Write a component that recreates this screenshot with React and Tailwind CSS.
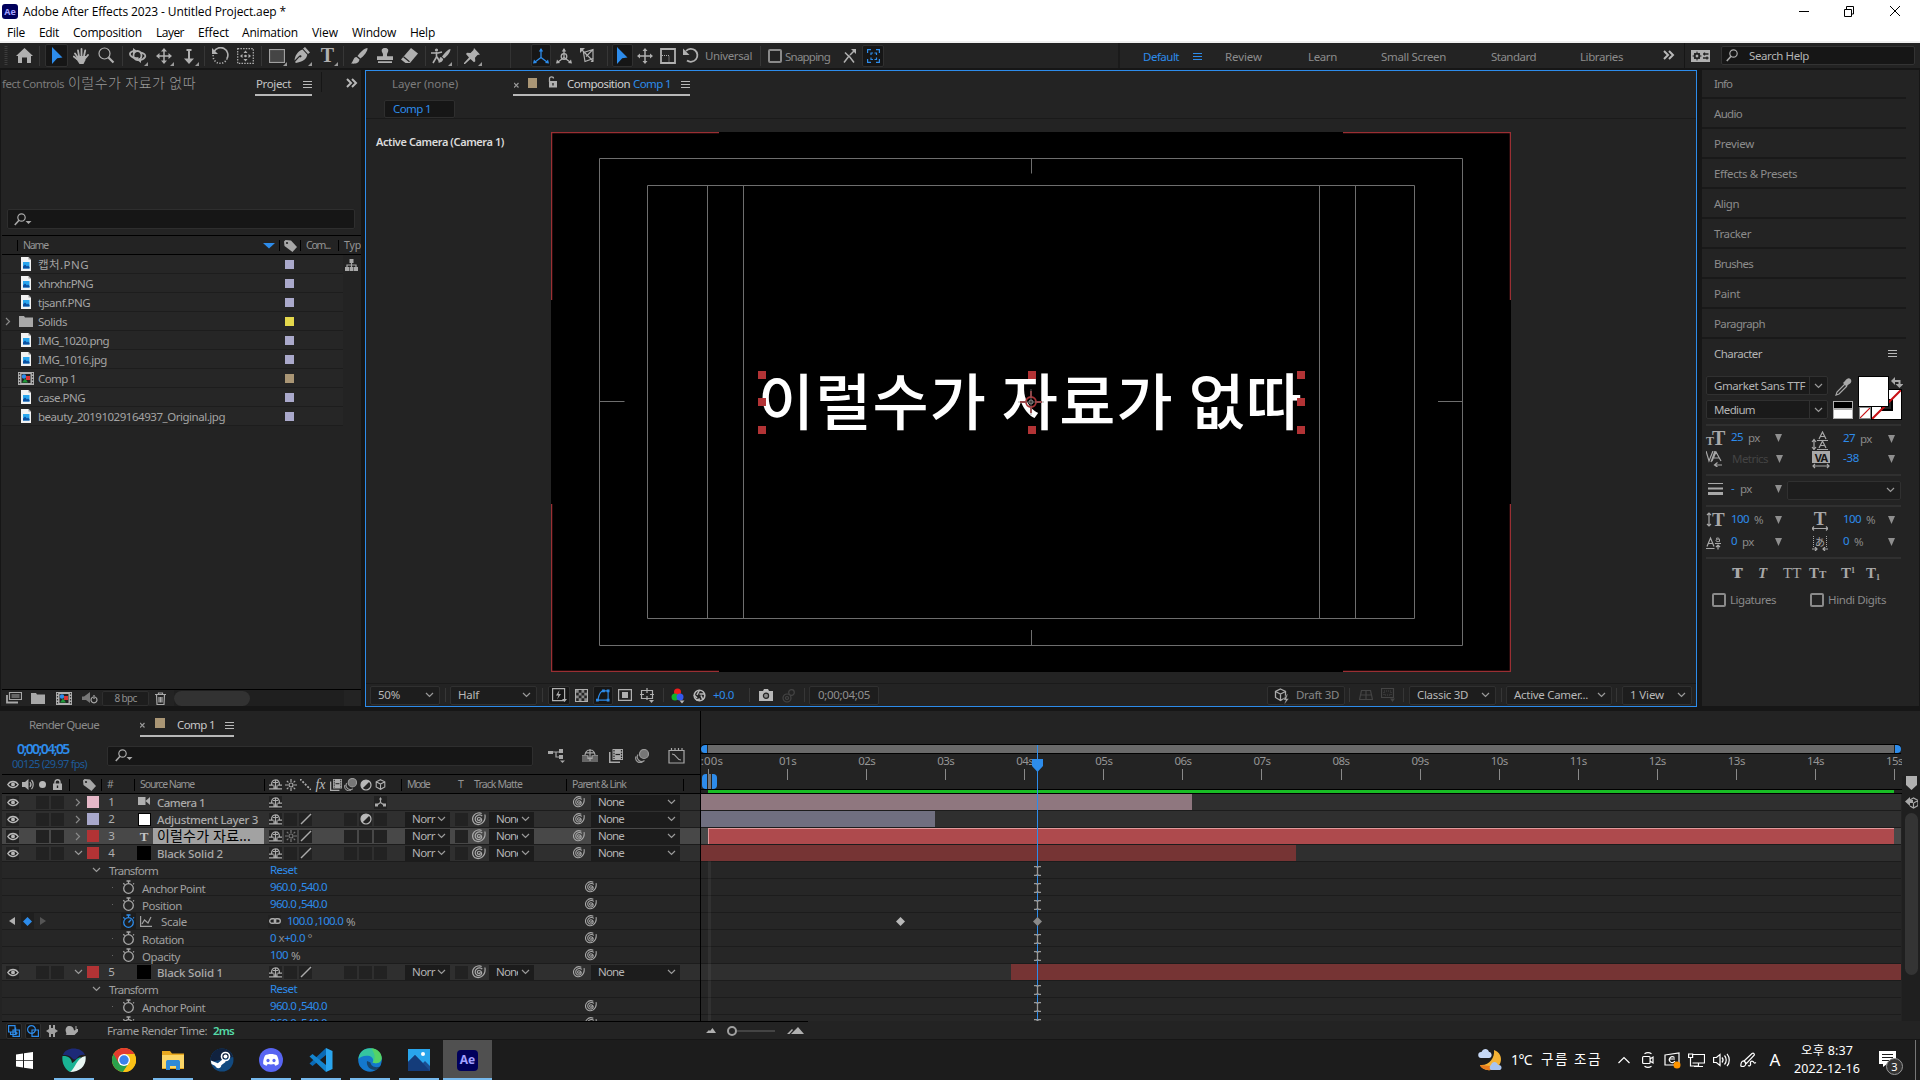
import React, { useLayoutEffect, useRef } from "react";

/* Text run fitted to a given width through letter spacing. */
function T({ w, c = "", children }) {
  const ref = useRef(null);
  useLayoutEffect(() => {
    const el = ref.current;
    if (!w || !el) return;
    el.style.letterSpacing = "0px";
    const natural = el.getBoundingClientRect().width;
    el.style.letterSpacing = (w - natural) / el.textContent.length + "px";
  }, [w, children]);
  return (
    <span ref={ref} className={"inline-block shrink-0 whitespace-nowrap leading-none " + c}>
      {children}
    </span>
  );
}

const Cell = ({ c = "", children }) => (
  <div className={"flex h-full shrink-0 items-center justify-center " + c}>{children}</div>
);
const Left = ({ c = "", children }) => (
  <div className={"flex h-full shrink-0 items-center " + c}>{children}</div>
);
const Svg = ({ w = 16, h = 16, vb, c = "", sw = 1.2, children }) => (
  <svg width={w} height={h} viewBox={vb || `0 0 ${w} ${h}`} className={"shrink-0 " + c} fill="none" stroke="currentColor" strokeWidth={sw}>
    {children}
  </svg>
);
const F = { fill: "currentColor", stroke: "none" };

/* ---------- small shared icons ---------- */
const Chevron = ({ c = "text-[#9a9a9a]" }) => <Svg w={9} h={6} c={c}><path d="M1 1l3.5 3.5L8 1" /></Svg>;
const Arrow = ({ c = "text-[#8a8a8a]" }) => <Svg w={6} h={9} c={c}><path d="M1 1l3.5 3.5L1 8" /></Svg>;
const Burger = ({ c = "text-[#b8b8b8]" }) => <Svg w={9} h={9} sw={1} c={c}><path d="M0 1.5h9M0 4.5h9M0 7.5h9" /></Svg>;
const Tri = () => <Svg w={7} h={8} c="text-[#8f8f8f]"><path d="M0 0h7L3.5 8z" {...F} /></Svg>;
const More = () => <Svg w={12} h={10} sw={2} c="text-[#b8b8b8]"><path d="M1 1l4 4-4 4M6 1l4 4-4 4" /></Svg>;
const SearchI = ({ drop }) => (
  <Svg w={18} h={13} c="text-[#a8a8a8]"><circle cx="7.5" cy="4.5" r="3.7" /><path d="M5 7.3L.8 12" strokeWidth="1.6" />{drop && <path d="M11.500 8h6l-3 3z" {...F} />}</Svg>
);
const Cursor = () => <Svg w={12} h={18} c="text-[#2d8ceb]"><path d="M1 0l10.500 10.500-5.300.8L1 17z" {...F} /></Svg>;
const Corner = ({ children, c = "w-[20px]" }) => (
  <div className={"relative flex h-[20px] items-center justify-center " + c}>
    {children}
    <Svg w={4} h={4} c="absolute right-0 bottom-0 text-[#9a9a9a]"><path d="M4 0v4H0z" {...F} /></Svg>
  </div>
);
const Whip = ({ s = 12 }) => (
  <Svg w={s} h={s} vb="0 0 14 14" sw={1.25} c="text-[#a8a8a8]">
    <path d="M8.300 7.200a1.500 1.500 0 1 1-1.500-1.700c1.900 0 3.100 1.500 2.700 3.100-.6 1.900-3.100 2.500-4.700 1.400C2.600 8.500 2.700 5.400 4.600 3.900c1.900-1.400 4.600-1.200 5.600.2M12.900 2.500c.6 3.500-.3 7-3.300 9-2.800 1.700-6.500 1.200-8-1.200C.2 7.900.5 4.900 2.300 2.900 4.200.8 7.600.4 9.700 1.500" />
  </Svg>
);
const Eye = () => <Svg w={12} h={9} sw={1.400} c="text-[#b8b8b8]"><path d="M.8 4.500C3.300.4 8.700.4 11.200 4.500 8.700 8.600 3.300 8.600.8 4.500z" /><circle cx="6" cy="4.400" r="1.900" {...F} /></Svg>;
const Shy = () => <Svg w={13} h={11} sw={1.200} c="text-[#aaa]"><path d="M2.500 6C2.500 2.600 4 .8 6.500.8s4 1.800 4 5.200M0 6.200h4.500M8.500 6.200H13M4 3.500h5M6.500 1v7.500M5 6.500v2.500h3V6.500M0 9.800h13" /></Svg>;
const Sun = ({ c = "text-[#aaa]" }) => <Svg w={12} h={12} c={c} sw={1.200}><circle cx="6" cy="6" r="2" /><path d="M6 0v3M6 9v3M0 6h3M9 6h3M1.800 1.800l1.600 1.600M8.600 8.600l1.600 1.600M1.800 10.200l1.600-1.600M8.600 3.400l1.600-1.600" /></Svg>;
const Slash = () => <Svg w={12} h={12} sw={1.400} c="text-[#aaa]"><path d="M1 11L11 1" /></Svg>;
const Half = () => <Svg w={12} h={12} c="text-[#b8b8b8]"><circle cx="6" cy="6" r="5" /><path d="M9.540 2.460A5 5 0 0 1 2.460 9.540z" transform="rotate(180 6 6)" {...F} /></Svg>;
const Blur = ({ s = 13 }) => <Svg w={s} h={s} vb="0 0 14 14" c="text-[#999]"><circle cx="9" cy="5" r="4.500" fill="#777" /><path d="M3 5.500a4.500 4.500 0 0 0 6.500 6M1 7.500a4.500 4.500 0 0 0 6.500 5.500" /></Svg>;
const Film = ({ s = 13 }) => <Svg w={s} h={s} vb="0 0 14 14" c="text-[#aaa]"><path d="M3.500 0h10.500v11H3.500zM0 3h1.500v9.500H11V14H0z" {...F} /><path d="M5 1v9M12.500 1v9" stroke="#222" strokeDasharray="1.500 1.200" /><path d="M6.500 5.500H11" stroke="#222" /></Svg>;
const Tag = () => <Svg w={13} h={12} c="text-[#a8a8a8]"><path d="M0 1.500L1.500 0 7 .5 13 7l-4.500 5L.5 6z" {...F} /><circle cx="3" cy="3" r="1.100" fill="#222" stroke="none" /></Svg>;
const Cube = ({ s = 12, c = "text-[#b0b0b0]" }) => <Svg w={s} h={s} vb="0 0 12 12" c={c}><path d="M6 .8l4.700 2.300v5.500L6 11.200 1.300 8.600V3.100zM1.300 3.100L6 5.500l4.700-2.400M6 5.500v5.700" /></Svg>;
const Axis = ({ c, s = 16, n }) => (
  <Svg w={s} h={s} vb="0 0 16 16" c={c} sw={1.300}>
    <path d="M8 1v8.500M8 9.500L2 14M8 9.500l6 4.500" /><path d="M8 0l2.200 3.500H5.800zM0 15.500l1-4 3 3.500zM16 15.500l-1-4-3 3.500z" {...F} />{n && <circle cx="8" cy="8.500" r="2.800" />}
  </Svg>
);
const Axis3D = () => (
  <Svg w={11} h={10} sw={1.200} c="text-[#aaa]"><path d="M5.500 1.500v4L2 8M5.500 5.500L9 8" /><path d="M4 2.500L5.500 0 7 2.500zM0 6.500h3v3H0zM8 6.500h3v3H8z" {...F} /></Svg>
);
const Stopwatch = ({ c = "text-[#a8a8a8]", on }) => (
  <Svg w={13} h={14} sw={1.300} c={c}><circle cx="6.500" cy="8.500" r="4.800" /><path d="M4.500 1h4M6.500 1v2.500M1.300 3.200l1.400 1.400M11.200 4.200l.8-.8" />{on && <path d="M6.500 8.500L9 5.800" />}</Svg>
);
const Keyframe = ({ c }) => <Svg w={9} h={9} c={c}><path d="M4.500 0L9 4.500 4.500 9 0 4.500z" {...F} /></Svg>;
const AeLogo = ({ c, t }) => (
  <div className={"flex items-center justify-center bg-[#00005b] font-bold text-[#a3a0ff] " + c}><span className={"leading-none " + t}>Ae</span></div>
);

/* ---------- top ---------- */
const TitleBar = () => (
  <div className="flex h-[22px] shrink-0 items-center bg-white pl-[2px] font-['Open_Sans','Noto_Sans_CJK_KR',sans-serif]">
    <AeLogo c="h-[15px] w-[16px] rounded-[3px]" t="text-[9px]" />
    <T w={263} c="ml-[5px] mt-px text-[12px] text-black">Adobe After Effects 2023 - Untitled Project.aep *</T>
    <div className="ml-auto flex items-center pr-[20px] text-black">
      <Svg w={10} h={10} sw={1}><path d="M0 5.500h10" /></Svg>
      <Svg w={10} h={11} sw={1} c="ml-[35px]"><path d="M.5 3.500h7v7h-7zM2.500 3V.5h7v7.500H8" /></Svg>
      <Svg w={10} h={10} sw={1} c="ml-[36px]"><path d="M0 0l10 10M10 0L0 10" /></Svg>
    </div>
  </div>
);
const MenuBar = () => (
  <div className="flex h-[21px] shrink-0 items-center border-b-2 border-[#f0f0f0] bg-white pl-[7px] pt-[3px] font-['Open_Sans','Noto_Sans_CJK_KR',sans-serif] text-[12px] text-black">
    {[["File", 18, 14], ["Edit", 20, 14], ["Composition", 69, 14], ["Layer", 28, 14], ["Effect", 31, 13], ["Animation", 56, 14], ["View", 26, 14], ["Window", 44, 14], ["Help", 25, 0]].map(([t, w, g]) => (
      <div key={t} className="flex shrink-0" style={{ paddingRight: g }}><T w={w}>{t}</T></div>
    ))}
  </div>
);
const Sep = ({ c }) => <Cell c={c}><div className="h-[20px] w-px bg-[#363636]" /></Cell>;
const Sel = ({ c = "h-[23px] w-[23px]", children }) => <div className={"flex shrink-0 items-center justify-center rounded-[2px] border border-[#303030] bg-[#161616] " + c}>{children}</div>;

const Toolbar = () => (
  <div className="flex h-[25px] shrink-0 items-center bg-[#232323] text-[#b0b0b0]">
    <Cell c="w-[12px]"><Svg w={4} h={20} sw={3} c="text-[#3c3c3c]"><path d="M2 0v20" strokeDasharray="1 1" /></Svg></Cell>
    <Cell c="w-[25px]"><Svg w={17} h={15}><path d="M8.500 0L17 8h-2v7h-4V9.500H6V15H2V8H0z" {...F} /></Svg></Cell>
    <Sep c="w-[5px]" />
    <Cell c="w-[29px]"><Sel><Cursor /></Sel></Cell>
    <Cell c="w-[20px]"><Svg w={16} h={16} sw={1.800}><path d="M4.500 9L2 5.500M6 8L5 2.500M8.500 8V1M11 8l1.200-5.500M12.500 10l2.500-3" strokeLinecap="round" /><path d="M3.500 8h9.800l-1 4.500L10.500 16h-4L3.500 11.500z" {...F} /><path d="M4 11L.8 8.500" strokeLinecap="round" /></Svg></Cell>
    <Cell c="w-[29px] pl-[2px]"><Svg w={17} h={17}><circle cx="6.500" cy="6.500" r="5.500" /><path d="M10.500 10.500l5 5" strokeWidth="2.200" /></Svg></Cell>
    <Sep c="w-[4px]" />
    <Cell c="w-[27px]"><Corner><Svg w={18} h={15} sw={1.800}><ellipse cx="8.500" cy="7.500" rx="4" ry="4.500" /><path d="M6 3C2 3 0 5 1.500 7.500c1.500 2 5 3 8 2.500M11 4.500c4 .5 6 2.500 5 4.500-1 1.800-3 3-6 3" /><path d="M4 0v6l4-3zM12 9v6l-4-3z" {...F} /></Svg></Corner></Cell>
    <Cell c="w-[25px]"><Corner><Svg w={16} h={16} sw={1.500}><path d="M8 2v12M2 8h12" /><path d="M8 0l3 3.500H5zM8 16l3-3.500H5zM0 8l3.500-3v6zM16 8l-3.500-3v6z" {...F} /></Svg></Corner></Cell>
    <Cell c="w-[25px]"><Corner><Svg w={12} h={16} sw={2}><path d="M6 2v11M3.500 2h5" /><path d="M6 16L1 10.500h10z" {...F} /></Svg></Corner></Cell>
    <Sep c="w-[6px]" />
    <Cell c="w-[26px]"><Svg w={17} h={17} sw={1.600}><path d="M2 4.500A7 7 0 0 1 15 11.500" /><path d="M15 11.500A7 7 0 0 1 1.500 7" strokeDasharray="1.200 1.600" /><path d="M0 1v6h6z" {...F} /></Svg></Cell>
    <Cell c="w-[25px]"><Svg w={17} h={16}><rect x=".7" y=".7" width="15.600" height="14.600" strokeDasharray="1.500 1.200" /><path d="M8.500 2.500l2 2.500h-4zM8.500 13.500l2-2.500h-4zM3 8l2.500-2v4zM14 8l-2.500-2v4z" {...F} /><circle cx="8.500" cy="8" r="1.300" {...F} /></Svg></Cell>
    <Sep c="w-[6px]" />
    <Cell c="w-[26px]"><Corner><Svg w={16} h={14} c="text-[#a0a0a0]"><rect x=".5" y=".5" width="15" height="13" fill="#454545" /></Svg></Corner></Cell>
    <Cell c="w-[24px]"><Corner><Svg w={16} h={17}><path d="M11 0l5 5.500-2 1.500-5-5.500zM8.500 2.500l4.800 5.200c-1 4.500-4 6.500-8.500 7.500L2 16l-1-1 4.500-5c.5.8 2 .3 2-.7S6 7.800 5 9L.5 13.500c.5-5 3-9 8-11z" {...F} /></Svg></Corner></Cell>
    <Cell c="w-[27px]"><Corner><span className="pb-[2px] font-['Liberation_Serif',serif] text-[20px] font-bold leading-none">T</span></Corner></Cell>
    <Sep c="w-[5px]" />
    <Cell c="w-[26px]"><Svg w={17} h={16}><path d="M16.500 0c.5 3-4 8.500-7 10.500L6.500 8C9 4.500 13.500 0 16.500 0zM5.500 9l3 2.500C8 15.500 4 16 0 15.500 2.500 14 2 9 5.500 9z" {...F} /></Svg></Cell>
    <Cell c="w-[25px]"><Svg w={16} h={15}><path d="M8 0c3.500 0 4 2.500 2.500 5-.6 1.200-.6 2.200-.3 3.200H16V12H0V8.200h5.800c.3-1 .3-2-.3-3.200C4 2.500 4.500 0 8 0zM1 13.200h14V15H1z" {...F} /></Svg></Cell>
    <Cell c="w-[25px]"><Svg w={17} h={16}><path d="M10 0l7 5.500L9 15H4.500L0 11.500z" {...F} /><path d="M2.500 8.800l6 5" stroke="#232323" /></Svg></Cell>
    <Sep c="w-[6px]" />
    <Cell c="w-[26px]"><Corner c="w-[22px]"><Svg w={20} h={16} sw={1.600}><circle cx="5.500" cy="2" r="1.600" {...F} /><path d="M0 5h4l3 0 4-1M5.500 4v5L2 15M6 9l3 5" /><path d="M19.500 1c0 4-5 8.500-6.500 9.500l-2-2C13 6 17 1 19.500 1zM10 9l2.200 2c-.5 3-3 3.500-5 3.500C8.500 13 8 9.500 10 9z" {...F} /></Svg></Corner></Cell>
    <Sep c="w-[6px]" />
    <Cell c="w-[24px]"><Corner><Svg w={16} h={16}><path d="M10 0l6 6.500-2.500.5-2.500 2.700.3 3.600-1.300 1L6.500 11 1 16H0v-1l5-5.500L2 6l1-1.300 3.500.3L9.500 2z" {...F} /></Svg></Corner></Cell>
    <div className="w-[24px] shrink-0" />
    <Cell c="w-[4px]"><div className="h-[25px] w-px bg-[#333]" /></Cell>
    <div className="w-[17px] shrink-0" />
    <Cell c="w-[23px]"><Sel c="h-[23px] w-[20px]"><Axis c="text-[#2d8ceb]" /></Sel></Cell>
    <Cell c="w-[24px]"><Axis n /></Cell>
    <Cell c="w-[22px]"><Svg w={14} h={15}><path d="M3.500 4.500L13 1.500v9L5 13.500zM2 2l11 11M6 8.500l7-7" /><path d="M0 0h5L0 5zM13.500 14v-3.500L10.500 14z" {...F} /></Svg></Cell>
    <div className="w-[6px] shrink-0" />
    <Sep c="w-[6px]" />
    <Cell c="w-[24px]"><Sel c="h-[23px] w-[21px]"><Cursor /></Sel></Cell>
    <Cell c="w-[22px]"><Svg w={16} h={16} sw={1.500}><path d="M8 2v12M2 8h12" /><path d="M8 0l2.500 3h-5zM8 16l2.500-3h-5zM0 8l3-2.500v5zM16 8l-3-2.500v5z" {...F} /></Svg></Cell>
    <Cell c="w-[24px]"><Svg w={16} h={16} sw={1.800}><path d="M1 1h14v14H1z" /><path d="M2 7.500h7v7" strokeWidth="1" strokeDasharray="1 1" /></Svg></Cell>
    <Cell c="w-[20px] pl-[2px]"><Svg w={17} h={17} sw={1.800}><path d="M3 4a6.500 6.500 0 1 1 1 9.500" /><path d="M0 1.500v6.500h6.500z" {...F} /></Svg></Cell>
    <Left c="w-[58px] pl-[5px] text-[11.500px] text-[#8a8a8a]"><T w={47}>Universal</T></Left>
    <Sep c="w-[5px]" />
    <Cell c="w-[22px] pl-px"><div className="h-[14px] w-[14px] rounded-[2px] border-2 border-[#8a8a8a]" /></Cell>
    <Left c="w-[53px] pt-[2px] text-[11.500px] text-[#8a8a8a]"><T w={45}>Snapping</T></Left>
    <Cell c="w-[22px]"><Svg w={13} h={14} sw={1.500}><path d="M1 13.500l5-6.500 5 6.500M2 3.500l3.500 3.500M7 6l4-4" /><path d="M8 0h5v5z" {...F} /></Svg></Cell>
    <Cell c="w-[26px]"><Sel c="h-[22px] w-[22px]"><Svg w={13} h={14} c="text-[#2d8ceb]"><path d="M.6 4V.6H4M9 .6h3.400V4M12.400 10v3.400H9M4 13.400H.6V10M4 6V4h2M7.500 4h2v2M4 8.500v2h2M7.500 10.500h2v-2" /></Svg></Sel></Cell>
    <div className="w-[232px] shrink-0" />
    <div className="h-full w-[2px] shrink-0 bg-[#1a1a1a]" />
    <div className="flex h-full items-center pl-[23px] pt-[2px] text-[11.500px] text-[#8c8c8c]">
      <T w={36} c="text-[#2d8ceb]">Default</T>
      <div className="ml-[14px] flex w-[32px]"><Burger c="text-[#2d8ceb]" /></div>
      <div className="flex w-[83px]"><T w={37}>Review</T></div>
      <div className="flex w-[73px]"><T w={29}>Learn</T></div>
      <div className="flex w-[110px]"><T w={65}>Small Screen</T></div>
      <div className="flex w-[89px]"><T w={45}>Standard</T></div>
      <div className="flex w-[83px]"><T w={43}>Libraries</T></div>
    </div>
    <Left c="w-[21px] pb-px"><More /></Left>
    <div className="h-full w-px bg-[#161616]" />
    <Cell c="w-[30px]"><Svg w={19} h={12}><path d="M0 0h19v12H0z" {...F} /><circle cx="6" cy="6" r="2.400" stroke="#232323" strokeWidth="1.800" /><path d="M6 1.500v9M1.500 6h9M3 3l6 6M9 3L3 9" stroke="#232323" strokeWidth=".9" /><circle cx="6" cy="6" r="1.200" {...F} /><path d="M12 4h5.500M12 8h5.500M13.500 2.500v3M16 6.500v3" stroke="#232323" strokeWidth="1.300" /></Svg></Cell>
    <div className="ml-[6px] flex h-[19px] w-[194px] items-center rounded-[2px] border border-[#333] bg-[#161616] pl-[4px]">
      <SearchI /><T w={60} c="ml-[5px] text-[11.500px] text-[#b4b4b4]">Search Help</T>
    </div>
  </div>
);

/* ---------- project panel ---------- */
const FileIcon = () => (
  <Svg w={10} h={14}><path d="M0 0h7.500L10 2.500V14H0z" fill="#f2f2f2" stroke="none" /><path d="M2 5h6.500v6.500H2z" fill="#2aa6ee" stroke="none" /><path d="M2 9.500l2-2 2 2 1-1 1.500 1.500v1.500H2z" fill="#0b4fa0" stroke="none" /><path d="M7.500 0v2.500H10z" fill="#999" stroke="none" /></Svg>
);
const Folder = ({ c = "text-[#a8a8a8]" }) => <Svg w={14} h={11} c={c}><path d="M0 0h5l1 1.500h8V11H0z" {...F} /></Svg>;
const CompIcon = () => (
  <Svg w={16} h={13}><path d="M0 0h16v13H0z" fill="#b0b0b0" stroke="none" /><path d="M1.500 1v11M14.500 1v11" stroke="#333" strokeDasharray="1.500 1.500" /><path d="M3.500 2h9v9h-9z" fill="#222" stroke="none" /><circle cx="6" cy="4.500" r="2.200" fill="#2d8ceb" stroke="none" /><path d="M8 4h4v4H8z" fill="#d33" stroke="none" /><path d="M4 10.500l3-4 3 4z" fill="#1f9a3a" stroke="none" /></Svg>
);
const FILES = [
  ["캡처.PNG", 51, "f"], ["xhrxhr.PNG", 55, "f"], ["tjsanf.PNG", 52, "f"], ["Solids", 29, "d"], ["IMG_1020.png", 71, "f"],
  ["IMG_1016.jpg", 69, "f"], ["Comp 1", 38, "c"], ["case.PNG", 47, "f"], ["beauty_20191029164937_Original.jpg", 187, "f"],
];
const ProjectPanel = () => (
  <section className="ml-px flex h-[636px] w-[360px] shrink-0 flex-col overflow-hidden bg-[#232323]">
    <div className="flex h-[26px] shrink-0 items-center pl-px text-[11.500px] text-[#7c7c7c]">
      <T w={62} c="mt-[2px]">fect Controls</T>
      <T w={128} c="ml-[4px] text-[14px] font-light text-[#999]">이럴수가 자료가 없따</T>
      <div className="relative ml-[59px] flex h-full w-[57px] items-center justify-between pl-px pt-[2px]">
        <T w={35} c="text-[#c4c4c4]">Project</T><Burger />
        <div className="absolute inset-x-0 bottom-0 h-[2px] bg-[#b8b8b8]" />
      </div>
      <div className="mb-[2px] ml-[9px] h-[20px] w-px bg-[#161616]" />
      <div className="ml-[24px]"><More /></div>
    </div>
    <div className="ml-[6px] mt-[113px] flex h-[20px] w-[348px] shrink-0 items-center rounded-[2px] border border-[#2e2e2e] bg-[#161616] pl-[6px]"><SearchI drop /></div>
    <div className="ml-px mt-[6px] flex h-[20px] shrink-0 items-center border-y border-black pt-px text-[10.500px] text-[#959595]">
      <div className="ml-[15px] h-[11px] w-px bg-black" />
      <T w={25} c="ml-[5px]">Name</T>
      <Svg w={12} h={6} c="ml-[215px] text-[#2d8ceb]"><path d="M0 0h12L6 5.500z" {...F} /></Svg>
      <div className="ml-[4px] h-[11px] w-px bg-black" />
      <div className="ml-[4px]"><Tag /></div>
      <div className="ml-[3px] h-[11px] w-px bg-black" />
      <T w={24} c="ml-[5px]">Com...</T>
      <div className="ml-[8px] h-[11px] w-px bg-black" />
      <T w={17} c="ml-[5px]">Typ</T>
    </div>
    {FILES.map(([n, w, k], i) => (
      <div key={n} className="ml-px flex h-[19px] shrink-0 items-center">
        <div className="flex h-full w-[341px] items-center border-b border-[#1d1d1d] bg-[#262626]">
          <Cell c="w-[12px]">{k === "d" && <Arrow />}</Cell>
          <Cell c="w-[24px]">{k === "f" ? <FileIcon /> : k === "d" ? <Folder /> : <CompIcon />}</Cell>
          <Left c="w-[247px] pt-px text-[11.500px] text-[#a4a4a4]"><T w={w}>{n}</T></Left>
          <div className={"h-[9px] w-[9px] " + (k === "d" ? "bg-[#e4d84c]" : k === "c" ? "bg-[#aa9675]" : "bg-[#aaa9cb]")} />
        </div>
        {i === 0 && <Svg w={13} h={12} c="ml-[2px] text-[#a8a8a8]"><path d="M4.500 0h4v4h-4zM0 8h4v4H0zM4.500 8h4v4h-4zM9 8h4v4H9z" {...F} /><path d="M6.500 4v4M2 8V6h9v2" /></Svg>}
      </div>
    ))}
    <div className="ml-px mt-auto flex h-[17px] shrink-0 items-center border-t border-black text-[#a8a8a8]">
      <Cell c="w-[24px]"><Svg w={16} h={12}><path d="M3.500.5h12v7h-12zM5.500 3h8M5.500 5h8" /><path d="M1 3v7.500h11" strokeWidth="1.800" /></Svg></Cell>
      <Cell c="w-[24px]"><Folder /></Cell>
      <Cell c="w-[27px]"><CompIcon /></Cell>
      <Cell c="w-[25px]"><Svg w={17} h={13}><path d="M9 0v11L5 8H1V4.500h2z" fill="#777" stroke="none" /><path d="M12 5a3 3 0 1 0 2 0M13 3v4" /></Svg></Cell>
      <div className="flex h-[15px] w-[47px] items-center justify-center rounded-[2px] border border-[#2e2e2e] bg-[#1d1d1d] text-[10px] text-[#8f8f8f]"><T w={22}>8 bpc</T></div>
      <Cell c="w-[22px]"><Svg w={11} h={13}><path d="M0 2.500h11M3.500 2.500V1h4v1.500M1.500 2.500l.5 10h7l.5-10M4 5v5.500M5.500 5v5.500M7 5v5.500" /></Svg></Cell>
      <div className="ml-[3px] flex h-full w-[170px] items-center bg-[#1f1f1f]"><div className="h-[15px] w-[76px] rounded-full bg-[#323232]" /></div>
    </div>
  </section>
);

/* ---------- composition viewer ---------- */
const Box = ({ c = "", children }) => (
  <div className={"flex h-[19px] shrink-0 items-center rounded-[2px] border border-[#303030] bg-[#1d1d1d] pl-[7px] pr-[5px] " + c}>{children}</div>
);
const VSep = ({ c = "" }) => <div className={"h-[14px] w-px shrink-0 bg-[#363636] " + c} />;
const HANDLES = [[207, 239], [477, 239], [746, 239], [207, 266], [746, 266], [207, 294], [477, 294], [746, 294]];

const Viewer = () => (
  <section className="ml-[4px] flex h-[637px] w-[1332px] shrink-0 flex-col border border-[#2d8ceb] bg-[#232323]">
    <div className="flex h-[25px] shrink-0 items-center pl-[26px] text-[11.500px]">
      <T w={66} c="mt-px text-[#7c7c7c]">Layer (none)</T>
      <div className="relative ml-[55px] flex h-full w-[177px] items-center pl-[1px] pt-px">
        <Svg w={5} h={6} c="mt-px text-[#999]"><path d="M0 1l4.500 4.500M4.500 1L0 5.500" /></Svg>
        <div className="mb-[2px] ml-[9px] h-[10px] w-[10px] bg-[#aa9675]" />
        <Svg w={9} h={12} c="mb-[4px] ml-[11px] text-[#b0b0b0]" sw={1.300}><path d="M1.500 6V2.500C1.500.3 5.500.3 5.500 2.500" /><path d="M1 5h8v6.500H1z" {...F} /><path d="M5 7v2.500" stroke="#222" /></Svg>
        <T w={63} c="ml-[10px] text-[#d0d0d0]">Composition</T>
        <T w={38} c="ml-[3px] text-[#2d8ceb]">Comp 1</T>
        <div className="ml-[10px]"><Burger /></div>
        <div className="absolute inset-x-0 bottom-0 h-[2px] bg-[#b8b8b8]" />
      </div>
    </div>
    <div className="flex h-[23px] shrink-0 border-b border-[#1a1a1a] pl-[18px] pt-[4px]">
      <div className="flex h-[18px] w-[71px] items-center rounded-[2px] border border-[#2e2e2e] bg-[#161616] pl-[8px] text-[11.500px] text-[#2d8ceb]"><T w={38}>Comp 1</T></div>
    </div>
    <div className="flex h-[565px] shrink-0 border-b border-[#1a1a1a]">
      <div className="w-[185px] pl-[10px] pt-[9px]"><T w={128} c="text-[11px] font-semibold text-[#dcdcdc]">Active Camera (Camera 1)</T></div>
      <div className="relative mt-[13px] h-[540px] w-[960px] overflow-hidden bg-black">
        <Svg w={960} h={540} sw={1} c="text-[#6e6e6e]">
          <path d="M48.500 26.500h863v487h-863zM96.500 53.500h767v433h-767zM156.500 53.500v433M192.500 53.500v433M768.500 53.500v433M804.500 53.500v433M480.500 26.500v15M480.500 498v15M48.500 269.500h25M887 269.500h25" />
          <path d="M168 .5H.5V168M792 .5h167.500V168M.5 372v167.500H168M959.500 372v167.500H792" stroke="#9a2f33" strokeWidth="1.500" />
        </Svg>
        <div className="absolute left-[207px] top-[233px] flex h-[66px] items-center">
          <T w={545} c="font-['Noto_Sans_CJK_KR',sans-serif] text-[61px] font-medium text-white">이럴수가 자료가 없따</T>
        </div>
        {HANDLES.map(([x, y]) => <div key={x + "-" + y} className="absolute h-[8px] w-[8px] bg-[#b23335]" style={{ left: x, top: y }} />)}
        <Svg w={26} h={26} c="absolute left-[467px] top-[257px] text-[#a83236]" sw={1.800}><circle cx="13" cy="13" r="5" /><circle cx="13" cy="13" r="2" stroke="#999" strokeWidth="1" /><path d="M13 2v6M13 18v6M2 13h6M18 13h6" /><path d="M13 0v26M0 13h26" stroke="#777" strokeWidth=".7" /></Svg>
      </div>
    </div>
    <div className="flex flex-1 items-center pl-[4px] text-[11.500px] text-[#b8b8b8]">
      <Box c="w-[70px] justify-between"><T w={22}>50%</T><Chevron /></Box>
      <VSep c="ml-[5px] mr-[4px]" />
      <Box c="w-[87px] justify-between"><T w={21}>Half</T><Chevron /></Box>
      <VSep c="ml-[5px] mr-[5px]" />
      <div className="flex h-full items-center text-[#b0b0b0]">
        <Cell c="w-[22px]"><Sel c="h-[19px] w-[22px]"><Svg w={15} h={14}><path d="M.6.6h12v12H.6z" /><path d="M7.500 2L4 7.500h2.500L5 11.500l4-5.500H6.500z" {...F} /><path d="M10 11h5l-2.500 3z" {...F} /></Svg></Sel></Cell>
        <Cell c="w-[22px]"><Svg w={13} h={13} vb="0 0 14 14"><path d="M.6.6h12.800v12.800H.6z" /><path d="M1 1h3v3H1zM7 1h3v3H7zM4 4h3v3H4zM10 4h3v3h-3zM1 7h3v3H1zM7 7h3v3H7zM4 10h3v3H4zM10 10h3v3h-3z" fill="#888" stroke="none" /></Svg></Cell>
        <Cell c="w-[22px]"><Sel c="h-[19px] w-[20px]"><Svg w={14} h={13} vb="0 0 15 14" c="text-[#2d8ceb]"><path d="M2 12C3 6 5 2 8 2h5v10z" /><path d="M0 10.500h3v3H0zM6.500 .5h3v3h-3zM11.500.5h3v3h-3zM11.500 10.500h3v3h-3z" {...F} /></Svg></Sel></Cell>
        <Cell c="w-[22px]"><Svg w={14} h={12}><path d="M.6.6h12.800v10.800H.6z" /><path d="M4 3h6v6H4z" {...F} /></Svg></Cell>
        <Cell c="w-[22px]"><Svg w={14} h={15}><path d="M1.500 2.500h11v8h-11zM7 0v5M7 8v4M0 6.500h4M10 6.500h4" /><path d="M9 12h5l-2.500 3z" {...F} /></Svg></Cell>
      </div>
      <VSep c="ml-[5px]" />
      <Cell c="w-[28px] pt-[2px]"><Svg w={14} h={16}><circle cx="6.500" cy="4" r="3.500" fill="#f01c1c" stroke="none" /><circle cx="4" cy="9" r="3.500" fill="#12b32a" stroke="none" /><circle cx="9" cy="9" r="3.500" fill="#3358ee" stroke="none" /><path d="M8.500 12.500h5L11 15.500z" {...F} /></Svg></Cell>
      <Cell c="w-[14px]"><Svg w={13} h={13} sw={1.600}><circle cx="6.500" cy="6.500" r="5.300" /><path d="M6.500 1L4 6M12 5H6.500M10 11L8 6.500M3 11l4-1M1 6l3 3" /></Svg></Cell>
      <T w={21} c="ml-[7px] text-[#2d8ceb]">+0.0</T>
      <VSep c="ml-[15px]" />
      <Cell c="w-[32px]"><Svg w={14} h={12}><path d="M0 2h4l1-2h4l1 2h4v10H0z" {...F} /><circle cx="7" cy="6.700" r="2.600" fill="#888" stroke="#232323" /></Svg></Cell>
      <Cell c="w-[12px] text-[#444]"><Svg w={13} h={15}><circle cx="5" cy="10" r="4" /><circle cx="9.500" cy="4.500" r="2.800" /><circle cx="5" cy="10" r="1.500" /></Svg></Cell>
      <VSep c="ml-[10px] mr-[4px]" />
      <Box c="w-[70px]"><T w={52} c="ml-[1px] text-[#8f8f8f]">0;00;04;05</T></Box>
      <div className="flex-1" />
      <Box c="w-[78px] justify-between !pl-[6px]"><Svg w={16} h={17} c="mt-[2px] text-[#aaa]" sw={1.300}><path d="M6.500 1l5 2.500v6l-5 3-5-3v-6zM1.500 3.500l5 2.500 5-2.500M6.500 6v6.500" /><path d="M13 6l-4 6h2.500l-1.500 5 5-6.500h-2.500L14 6z" fill="#aaa" stroke="#1d1d1d" strokeWidth=".5" /></Svg><T w={43} c="text-[#868686]">Draft 3D</T></Box>
      <VSep c="ml-[4px]" />
      <Cell c="w-[32px] text-[#444]"><Svg w={14} h={10}><path d="M2.500.5h9l2 9H.5zM7 0v10M1 5h12" /></Svg></Cell>
      <Cell c="w-[12px] text-[#444]"><Svg w={14} h={14}><path d="M.5.5h12v9H.5z" /><path d="M3 3h7v4H3z" strokeDasharray="1 1" /><path d="M9 10.500h5L11.500 14z" {...F} /></Svg></Cell>
      <VSep c="ml-[9px] mr-[5px]" />
      <Box c="w-[87px] justify-between"><T w={51}>Classic 3D</T><Chevron /></Box>
      <VSep c="ml-[5px] mr-[4px]" />
      <Box c="w-[106px] justify-between"><T w={74}>Active Camer...</T><Chevron /></Box>
      <VSep c="ml-[4px] mr-[5px]" />
      <Box c="mr-[4px] w-[70px] justify-between"><T w={34}>1 View</T><Chevron /></Box>
    </div>
  </section>
);

/* ---------- right dock ---------- */
const Num = ({ c, w, v, u, uw, tri = true }) => (
  <div className={"flex shrink-0 items-center text-[11.500px] " + c}>
    <div className="flex shrink-0 items-center"><T w={w} c="pb-[2px] text-[#2d8ceb]">{v}</T>{u && <T w={uw} c="ml-[5px] text-[#8a8a8a]">{u}</T>}</div>
    {tri && <div className="ml-auto"><Tri /></div>}
  </div>
);
const Serif = ({ c = "", children }) => <span className={"shrink-0 font-['Liberation_Serif',serif] leading-none " + c}>{children}</span>;
const DropField = ({ w, t }) => (
  <div className="flex h-[19px] w-[122px] items-center rounded-[2px] border border-[#303030] bg-[#1a1a1a] pl-[7px] text-[11.500px] text-[#b4b4b4]">
    <T w={w}>{t}</T>
    <div className="ml-auto flex h-full w-[18px] items-center justify-center border-l border-[#303030]"><Chevron /></div>
  </div>
);
const Rule = () => <div className="h-[2px] w-[195px] shrink-0 bg-[#303030]" />;
const Check = ({ c, t, w }) => (
  <div className={"flex shrink-0 items-center text-[11.500px] text-[#8a8a8a] " + c}><div className="mr-[4px] h-[14px] w-[14px] rounded-[2px] border-2 border-[#8a8a8a]" /><T w={w}>{t}</T></div>
);
const RightDock = () => (
  <section className="ml-[5px] flex h-[636px] w-[217px] shrink-0 flex-col bg-[#232323]">
    {[["Info", 18], ["Audio", 28], ["Preview", 40], ["Effects & Presets", 83], ["Align", 25], ["Tracker", 37], ["Brushes", 39], ["Paint", 26], ["Paragraph", 51]].map(([t, w], i) => (
      <div key={t} className={"flex w-[204px] shrink-0 items-center border-b-2 border-[#191919] pl-[12px] pt-px text-[11.500px] text-[#8c8c8c] " + (i ? "h-[30px]" : "h-[29px]")}><T w={w}>{t}</T></div>
    ))}
    <div className="flex h-[29px] w-[204px] shrink-0 items-center justify-between pl-[12px] pr-[9px] text-[11.500px] text-[#b4b4b4]"><T w={48}>Character</T><Burger /></div>
    <div className="ml-[4px] mt-[8px] flex h-[44px] shrink-0">
      <div className="flex flex-col gap-[5px]"><DropField w={91} t="Gmarket Sans TTF" /><DropField w={41} t="Medium" /></div>
      <div className="ml-[5px] flex w-[20px] flex-col gap-[5px] pt-[2px]">
        <Svg w={17} h={18} c="ml-[2px] text-[#a8a8a8]"><path d="M10 6L2 14l-1 3 3-1 8-8" /><path d="M8 5l2-2c2-3 4-3.500 5.500-2s1 4-2 5.500l-2 2z" {...F} /></Svg>
        <div className="h-[18px] w-[20px] border border-[#b0b0b0] bg-white"><div className="h-[8px] border-b-2 border-[#b0b0b0] bg-black" /></div>
      </div>
      <div className="relative ml-[5px] h-[44px] w-[44px]">
        <div className="absolute bottom-0 right-0 flex h-[31px] w-[31px] items-center justify-center border border-black bg-white"><div className="h-[12px] w-[12px] border-2 border-black bg-[#232323]" /><Svg w={29} h={29} sw={2} c="absolute text-[#c81014]"><path d="M0 29L29 0" /></Svg></div>
        <div className="absolute left-0 top-0 h-[31px] w-[31px] border border-black bg-white" />
        <div className="absolute bottom-[1px] left-[1px] h-[12px] w-[12px] border border-[#888] bg-white"><Svg w={10} h={10} c="text-[#c81014]"><path d="M0 10L10 0" /></Svg></div>
        <Svg w={12} h={11} sw={2} c="absolute -right-px top-[1px] text-[#a8a8a8]"><path d="M2.500 4h6v4" /><path d="M4 0v8L0 4zM4.500 7h8l-4 4z" {...F} /></Svg>
      </div>
    </div>
    <div className="ml-[4px] mt-[4px] flex flex-col text-[#a8a8a8]">
      <Rule />
      <div className="flex h-[24px] items-center">
        <div className="flex w-[25px] items-baseline"><Serif c="text-[12px] font-bold">T</Serif><Serif c="text-[20px] font-bold -ml-[2px]">T</Serif></div>
        <Num c="w-[51px]" w={12} v="25" u="px" uw={12} />
        <Svg w={17} h={19} c="ml-[29px] mt-[4px]" sw={1.200}><path d="M3 9v9M1 11l2-2.500L5 11M1 16l2 2.500L5 16M6 9.500h11M6 18.500h11" /><path d="M8 8l3.500-7L15 8M9 5.500h5M8 17l3.500-7 3.500 7M9 14.500h5" /></Svg>
        <Num c="ml-[15px] w-[52px] pt-[2px]" w={12} v="27" u="px" uw={12} />
      </div>
      <div className="flex h-[24px] items-start">
        <Svg w={18} h={16} c="mt-px" sw={1.200}><path d="M0 0l3 10 4-10M6 10l4-9 5 9M8 7h5.500M16 14H9M11.500 11.500L8.500 14l3 2M5 11L9 0" /></Svg>
        <div className="ml-[8px] mt-px flex h-[16px] w-[51px] items-center justify-between text-[11.500px] text-[#444]"><T w={36}>Metrics</T><Tri /></div>
        <div className="ml-[29px] mt-px flex flex-col items-center"><div className="flex h-[12px] w-[18px] items-center justify-center bg-[#a8a8a8] text-[11px] font-bold leading-none tracking-[-1px] text-[#161616]">VA</div><Svg w={18} h={6}><path d="M1 3h16M3 1L1 3l2 2M15 1l2 2-2 2" /></Svg></div>
        <Num c="ml-[13px] mt-px h-[15px] w-[52px]" w={16} v="-38" />
      </div>
      <Rule />
      <div className="flex h-[29px] items-center pb-[3px]">
        <Svg w={15} h={12} c="ml-[2px]"><path d="M0 0h15v1H0zM0 4.500h15v2H0zM0 9h15v3H0z" {...F} /></Svg>
        <Num c="ml-[8px] w-[51px]" w={4} v="-" u="px" uw={12} />
        <div className="ml-[5px] mt-[2px] flex h-[19px] w-[114px] items-center justify-end rounded-[2px] border border-[#303030] bg-[#1d1d1d] pr-[5px]"><Chevron /></div>
      </div>
      <Rule />
      <div className="flex h-[25px] items-center">
        <div className="flex w-[25px] items-center"><Svg w={6} h={15}><path d="M3 1v13M1 3l2-2 2 2M1 12l2 2 2-2" /></Svg><Serif c="text-[19px] font-bold">T</Serif></div>
        <Num c="w-[51px]" w={18} v="100" u="%" uw={9} />
        <div className="ml-[29px] flex w-[18px] flex-col items-center pt-[4px]"><Serif c="h-[14px] text-[19px] font-bold !leading-[14px]">T</Serif><Svg w={16} h={5}><path d="M0 2.500h16M2 .5l-2 2 2 2M14 .5l2 2-2 2" /></Svg></div>
        <Num c="ml-[14px] w-[52px]" w={18} v="100" u="%" uw={9} />
      </div>
      <div className="flex h-[25px] items-center pb-[6px]">
        <div className="flex w-[25px] items-center">
          <Svg w={15} h={14} c="mt-[2px]"><path d="M1 10.500L4.500 2 8 10.500M2.500 7.500h4M0 12.500h8.500M9 7.500h6M12 13.500v-4M10 11l2-2 2 2" /><path d="M10 2.500c2-1.200 3.500 0 3.500 1.200V5.500c-1.500 0-3.500.5-3.500-1s2-1.300 3.500-1.300" strokeWidth="1" /></Svg>
        </div>
        <Num c="w-[51px]" w={6} v="0" u="px" uw={12} />
        <div className="ml-[29px] flex w-[18px] flex-col items-center pt-[3px]"><span className="border-x border-dotted border-[#a8a8a8] px-px font-['Noto_Sans_CJK_JP',sans-serif] text-[10px] leading-[11px]">あ</span><Svg w={16} h={4}><path d="M0 2h5M3 0l2 2-2 2M16 2h-5M13 0l-2 2 2 2" /></Svg></div>
        <Num c="ml-[14px] w-[52px]" w={6} v="0" u="%" uw={9} />
      </div>
      <Rule />
      <div className="flex h-[28px] items-center pb-[2px] pl-[26px] text-[15px]">
        <div className="w-[26px]"><Serif c="font-bold [text-shadow:1px_0_0_currentColor]">T</Serif></div>
        <div className="w-[25px]"><Serif c="font-bold italic">T</Serif></div>
        <div className="w-[26px]"><Serif>TT</Serif></div>
        <div className="w-[32px]"><Serif c="font-bold">T</Serif><Serif c="text-[11px] font-bold">T</Serif></div>
        <div className="w-[25px]"><Serif c="font-bold">T</Serif><Serif c="relative -top-[5px] text-[8px] font-bold">1</Serif></div>
        <div><Serif c="font-bold">T</Serif><Serif c="relative top-[2px] text-[8px] font-bold">1</Serif></div>
      </div>
      <div className="flex h-[26px] items-center pl-[6px]"><Check c="w-[98px]" t="Ligatures" w={46} /><Check t="Hindi Digits" w={58} /></div>
    </div>
  </section>
);

/* ---------- timeline ---------- */
const LAYERS = [
  { k: "layer", n: 1, name: "Camera 1", w: 48, sw: "bg-[#e6b8c8]", icon: "cam", bar: [0, 491, "bg-[#8f777f]"] },
  { k: "layer", n: 2, name: "Adjustment Layer 3", w: 101, sw: "bg-[#a8a8cb]", icon: "white", bar: [0, 234, "bg-[#706f80]"] },
  { k: "layer", n: 3, name: "이럴수가 자료...", w: 94, sw: "bg-[#b23335]", icon: "T", sel: true, bar: [7, 1186, "bg-[#ae4a4d] border-l border-t border-[#e39a9c]"] },
  { k: "layer", n: 4, name: "Black Solid 2", w: 66, sw: "bg-[#b23335]", icon: "black", open: true, bar: [0, 595, "bg-[#763434]"] },
  { k: "group" },
  { k: "prop", name: "Anchor Point", w: 63, v: "960.0 ,540.0", vw: 57 },
  { k: "prop", name: "Position", w: 40, v: "960.0 ,540.0", vw: 57 },
  { k: "scale" },
  { k: "prop", name: "Rotation", w: 42, v: "rot" },
  { k: "prop", name: "Opacity", w: 38, v: "100", vw: 18, u: "%" },
  { k: "layer", n: 5, name: "Black Solid 1", w: 66, sw: "bg-[#b23335]", icon: "black", open: true, bar: [310, 890, "bg-[#763434]"] },
  { k: "group" },
  { k: "prop", name: "Anchor Point", w: 63, v: "960.0 ,540.0", vw: 57 },
  { k: "prop", name: "Position", w: 40, v: "960.0 ,540.0", vw: 57 },
];
const Dark = ({ c = "w-[13px]", children, on = true }) => (
  <div className={"flex h-[13px] shrink-0 items-center justify-center " + (on ? "bg-[#222] " : "") + c}>{children}</div>
);
const Drop = ({ c, t, w, clip }) => (
  <div className={"flex h-[15px] shrink-0 items-center justify-between bg-[#1c1c1c] pl-[7px] pr-[4px] text-[11.500px] text-[#b4b4b4] " + c}>
    <div className={"flex h-full items-center overflow-hidden " + clip}><T w={w}>{t}</T></div><Chevron />
  </div>
);
const LayerRow = ({ l }) => {
  const cam = l.icon === "cam";
  return (
    <div className={"flex h-[17px] shrink-0 items-center border-b border-[#1c1c1c] pl-[4px] " + (l.sel ? "bg-[#484848]" : "bg-[#2f2f2f]")}>
      <Dark><Eye /></Dark>
      <div className="w-[17px] shrink-0" />
      <Dark /><div className="w-[2px] shrink-0" /><Dark />
      <Cell c="ml-[6px] mr-px w-[16px]">{l.open ? <Chevron /> : <Arrow />}</Cell>
      <div className={"h-[12px] w-[12px] shrink-0 " + l.sw} />
      <Cell c="mr-[13px] w-[25px] pb-px text-[11.500px] text-[#b0b0b0]">{l.n}</Cell>
      <Cell c="w-[14px]">
        {cam && <Svg w={12} h={8} c="mb-[3px] text-[#b0b0b0]"><path d="M0 0h7.500v8H0zM7.500 4L12 0v8z" {...F} /></Svg>}
        {l.icon === "white" && <div className="h-[13px] w-[13px] border border-black bg-white" />}
        {l.icon === "black" && <div className="h-[14px] w-[14px] bg-black" />}
        {l.icon === "T" && <Serif c="text-[13px] font-bold text-[#c4c4c4]">T</Serif>}
      </Cell>
      <div className={"ml-[2px] flex h-[16px] w-[111px] shrink-0 items-center pl-[4px] " + (l.sel ? "bg-[#a2a2a2] text-[14px] text-black" : "pt-px text-[11.500px] font-medium text-[#aaa]")}><T w={l.w}>{l.name}</T></div>
      <div className="ml-[5px] flex shrink-0 gap-[2px]">
        <Dark><Shy /></Dark>
        <Dark on={!cam}>{l.sel && <Sun c="text-[#777]" />}</Dark>
        <Dark on={!cam}>{!cam && <Slash />}</Dark>
        <Dark on={false} /><Dark on={false} />
        <Dark on={!cam} /><Dark on={!cam}>{l.n === 2 && <Half />}</Dark>
        <Dark>{cam && <Axis3D />}</Dark>
      </div>
      {cam ? <div className="w-[184px] shrink-0" /> : (
        <>
          <Drop c="ml-[18px] w-[45px]" t="Norr" w={23} clip="w-[24px]" />
          <div className="w-[5px] shrink-0" /><Dark />
          <Cell c="ml-[3px] w-[16px]"><Whip s={14} /></Cell>
          <Drop c="ml-[2px] w-[45px]" t="None" w={26} clip="w-[22px]" />
          <div className="w-[37px] shrink-0" />
        </>
      )}
      <Cell c="w-[15px]"><Whip /></Cell>
      <Drop c="ml-[5px] w-[89px]" t="None" w={26} clip="w-[28px]" />
    </div>
  );
};
const PropRow = ({ p }) => (
  <div className="flex h-[17px] shrink-0 items-center border-b border-[#1c1c1c] bg-[#262626] text-[11.500px] text-[#a0a0a0]">
    {p.k === "group" ? (
      <>
        <Cell c="ml-[87px] w-[15px]"><Chevron /></Cell>
        <Left c="ml-[5px] w-[161px] pt-[2px]"><T w={49}>Transform</T></Left>
        <T w={27} c="text-[#2d8ceb]">Reset</T>
      </>
    ) : p.k === "scale" ? (
      <>
        <Cell c="w-[19px]"><Svg w={6} h={8} c="text-[#b0b0b0]"><path d="M6 0v8L0 4z" {...F} /></Svg></Cell>
        <Cell c="w-[13px] bg-[#1f1f1f]"><Keyframe c="text-[#2d8ceb]" /></Cell>
        <Cell c="w-[18px]"><Svg w={6} h={8} c="text-[#555]"><path d="M0 0v8l6-4z" {...F} /></Svg></Cell>
        <Cell c="ml-[69px] w-[15px] bg-[#1d1d1d]"><Stopwatch c="text-[#2d8ceb]" on /></Cell>
        <Cell c="ml-[4px] w-[12px]"><Svg w={12} h={11} c="text-[#a0a0a0]"><path d="M.6 0v10.400H12M2 8l2.500-4L8 7l3-6" /></Svg></Cell>
        <Left c="ml-[9px] w-[108px] pt-[2px]"><T w={26}>Scale</T></Left>
        <Dark c="-ml-px mr-px w-[13px]"><Svg w={12} h={6} sw={1.400} c="text-[#aaa]"><rect x=".7" y=".7" width="6" height="4.600" rx="2.300" /><rect x="5.300" y=".7" width="6" height="4.600" rx="2.300" /></Svg></Dark>
        <T w={56} c="ml-[5px] pb-px text-[#2d8ceb]">100.0 ,100.0</T><T w={9} c="ml-[3px] mt-px">%</T>
        <div className="ml-auto mr-[103px]"><Whip /></div>
      </>
    ) : (
      <>
        <Cell c="ml-[109px] w-[3px]"><div className="h-px w-px bg-[#666]" /></Cell>
        <Cell c="ml-[8px] w-[13px]"><Stopwatch /></Cell>
        <Left c="ml-[7px] w-[128px] pt-[3px]"><T w={p.w}>{p.name}</T></Left>
        {p.v === "rot"
          ? <T w={42} c="pb-px text-[#2d8ceb]">0 <span className="text-[#8a8a8a]">x</span>+0.0 <span className="text-[#8a8a8a]">°</span></T>
          : <T w={p.vw} c="pb-px text-[#2d8ceb]">{p.v}</T>}
        {p.u && <T w={9} c="ml-[3px] mt-px">{p.u}</T>}
        <div className="ml-auto mr-[103px]"><Whip /></div>
      </>
    )}
  </div>
);
const HSep = ({ c = "" }) => <div className={"h-[12px] w-px shrink-0 bg-black " + c} />;

const TimelineLeft = () => (
  <div className="flex w-[701px] shrink-0 flex-col border-r border-black">
    <div className="flex h-[26px] shrink-0 items-center text-[11.500px]">
      <T w={70} c="ml-[29px] mt-[2px] text-[#8a8a8a]">Render Queue</T>
      <div className="relative ml-[41px] flex h-full w-[94px] items-center pt-[2px]">
        <Svg w={5} h={6} c="text-[#999]"><path d="M0 1l4.500 4.500M4.500 1L0 5.500" /></Svg>
        <div className="mb-[4px] ml-[10px] h-[10px] w-[10px] bg-[#aa9675]" />
        <T w={38} c="ml-[12px] text-[#c8c8c8]">Comp 1</T>
        <div className="ml-auto"><Burger /></div>
        <div className="absolute inset-x-0 bottom-0 h-[2px] bg-[#b8b8b8]" />
      </div>
    </div>
    <div className="flex h-[37px] shrink-0 items-center">
      <div className="flex w-[107px] flex-col pl-[12px] text-[#2d8ceb]">
        <T w={74} c="ml-[5px] text-[14px] font-semibold">0;00;04;05</T>
        <T w={82} c="mt-[2px] text-[11px] text-[#1d5a99]">00125 (29.97 fps)</T>
      </div>
      <div className="flex h-[20px] w-[426px] shrink-0 items-center rounded-[2px] border border-[#2e2e2e] bg-[#161616] pl-[7px]"><SearchI drop /></div>
      <div className="flex items-center text-[#a8a8a8]">
        <Svg w={17} h={14} c="ml-[15px]"><path d="M0 2h5v3H0zM11 0h4v4h-4zM11 6h4v4h-4z" {...F} /><path d="M5 3h6M8 3v5h3" /><path d="M12 11.500h5L14.500 14z" {...F} /></Svg>
        <div className="ml-[17px] w-[16px]"><Svg w={16} h={13}><path d="M0 8h16v5H0z" fill="#666" stroke="none" /><path d="M3 6C3.500 2.500 5 1 8 1s4.500 1.500 5 5M8 0v12M4 3.800h8M0 6.800h6M10 6.800h6M6 6.500v3h4v-3" /></Svg></div>
        <div className="ml-[11px]"><Film s={14} /></div>
        <div className="ml-[12px]"><Blur s={14} /></div>
        <Svg w={17} h={16} c="ml-[19px]"><path d="M1 2.500h15V15H1zM3.500 0v3M7 0v3M10.500 0v3M14 0v3M4 6c5 0 4 6 9 6" /></Svg>
      </div>
    </div>
    <div className="ml-[2px] flex h-[20px] shrink-0 items-center border-y border-black pt-px text-[10.500px] text-[#959595]">
      <Cell c="ml-[4px] w-[13px]"><Eye /></Cell>
      <Cell c="ml-[2px] w-[13px]"><Svg w={12} h={11} c="text-[#b0b0b0]"><path d="M0 3h3l3.500-3v11L3 8H0z" {...F} /><path d="M8 3c1.200 1.500 1.200 3.500 0 5M9.500 1c2.300 2.500 2.300 6.500 0 9" /></Svg></Cell>
      <Cell c="w-[16px]"><div className="h-[7px] w-[7px] rounded-full bg-[#b8b8b8]" /></Cell>
      <Cell c="w-[15px]"><Svg w={9} h={11} c="text-[#b0b0b0]" sw={1.400}><path d="M0 4.500h9V11H0z" {...F} /><path d="M2 5V3c0-3 5-3 5 0v2" /><path d="M4.500 6.500v2.500" stroke="#222" /></Svg></Cell>
      <HSep c="ml-[4px]" />
      <div className="ml-[13px]"><Tag /></div>
      <HSep c="ml-[5px]" />
      <T w={5} c="ml-[5px]">#</T>
      <HSep c="ml-[22px]" />
      <T w={54} c="ml-[5px]">Source Name</T>
      <HSep c="ml-[70px]" />
      <div className="ml-[4px] flex shrink-0 gap-[2px]">
        <Dark on={false}><Shy /></Dark><Dark on={false}><Sun /></Dark>
        <Dark on={false}><Svg w={11} h={11} sw={1.800} c="text-[#aaa]"><path d="M0 0l11 11" strokeDasharray="2 1.500" /></Svg></Dark>
        <Dark on={false}><span className="font-['Liberation_Serif',serif] text-[14px] italic leading-none text-[#bbb]">fx</span></Dark>
        <Dark on={false}><Film s={12} /></Dark><Dark on={false}><Blur s={13} /></Dark><Dark on={false}><Half /></Dark><Dark on={false}><Cube s={11} /></Dark>
      </div>
      <HSep c="ml-[14px]" />
      <T w={22} c="ml-[5px]">Mode</T><T w={6} c="ml-[29px]">T</T><T w={48} c="ml-[10px]">Track Matte</T>
      <HSep c="ml-[44px]" /><T w={54} c="ml-[5px]">Parent &amp; Link</T><HSep c="ml-[57px]" />
    </div>
    <div className="ml-[2px] flex h-[227px] shrink-0 flex-col overflow-hidden">
      {LAYERS.map((l, i) => (l.k === "layer" ? <LayerRow key={i} l={l} /> : <PropRow key={i} p={l} />))}
    </div>
  </div>
);

const IBeam = () => <Svg w={7} h={10} sw={1.300} c="text-[#9a9a9a]"><path d="M0 .7h2.500l1 1 1-1H7M3.500 1.500v7M0 9.300h2.500l1-1 1 1H7" /></Svg>;
const SECONDS = ["0:00s", "01s", "02s", "03s", "04s", "05s", "06s", "07s", "08s", "09s", "10s", "11s", "12s", "13s", "14s", "15s"];

const TimelineRight = () => (
  <div className="flex min-w-0 flex-1">
    <div className="relative flex w-[1201px] shrink-0 flex-col overflow-hidden">
      <div className="mt-[33px] flex h-[10px] w-[1200px] shrink-0 overflow-hidden rounded-t-[4px] border-y border-black">
        <div className="w-[6px] rounded-l-full bg-[#2d8ceb]" /><div className="ml-px flex-1 bg-[#6a6a6a]" /><div className="ml-px w-[6px] rounded-r-full bg-[#2d8ceb]" />
      </div>
      <div className="-ml-[32px] flex h-[35px] w-[1266px] shrink-0">
        {SECONDS.map((s, i) => (
          <div key={s} className="flex w-[79.070px] shrink-0 flex-col items-center pt-px text-[11.500px] text-[#959595]">
            <T w={i ? 17 : 29}>{s}</T><div className="mt-[2px] h-[11px] w-px bg-[#8a8a8a]" />
          </div>
        ))}
      </div>
      <div className="flex h-[5px] shrink-0 border-y border-black"><div className="ml-[7px] w-[1186px] bg-[#19bd25]" /></div>
      <div className="flex h-[227px] shrink-0 flex-col overflow-hidden">
        {LAYERS.map((l, i) => (
          <div key={i} className={"flex h-[17px] w-[1200px] shrink-0 border-b border-[#1c1c1c] " + (l.sel ? "bg-[#484848]" : l.bar ? "bg-[#2f2f2f]" : "bg-[#262626]")}>
            {l.bar && <div className={"h-full " + l.bar[2]} style={{ marginLeft: l.bar[0], width: l.bar[1] }} />}
          </div>
        ))}
      </div>
      {/* current-time overlays */}
      <div className="absolute left-[7px] top-[150px] h-[160px] w-[3px] bg-white/5" />
      <div className="absolute left-px top-[63px] flex h-[15px]"><div className="w-[5px] rounded-l-[4px] bg-[#2d8ceb]" /><div className="mx-px w-[3px] bg-[#777]" /><div className="w-[5px] rounded-r-[4px] bg-[#2d8ceb]" /></div>
      <div className="absolute left-[336px] top-[34px] h-[276px] w-px bg-[#2d8ceb]" />
      <Svg w={11} h={13} c="absolute left-[331px] top-[48px] text-[#2d8ceb]"><path d="M0 0h11v7l-5.500 6L0 7z" {...F} /></Svg>
      <div className="absolute left-[331px] top-[151px] flex h-[159px] w-[11px] flex-col overflow-hidden">
        {["i", "i", "i", "k", "i", "i", "", "i", "i", "i"].map((k, i) => (
          <div key={i} className="flex h-[17px] shrink-0 items-center justify-center">{k === "i" ? <IBeam /> : k === "k" ? <Keyframe c="text-[#8a8a8a]" /> : null}</div>
        ))}
      </div>
      <div className="absolute left-[195px] top-[206px]"><Keyframe c="text-[#b8b8b8]" /></div>
    </div>
    <div className="flex flex-1 flex-col items-center bg-[#1f1f1f]">
      <div className="h-[65px] w-full bg-[#232323]" />
      <Svg w={11} h={14} c="text-[#b0b0b0]"><path d="M0 0h11v9l-5.500 5L0 9z" {...F} /></Svg>
      <Svg w={13} h={13} c="mt-[6px] text-[#a8a8a8]"><path d="M0 5.500L5 1v3h3v3H5v3z" {...F} /><path d="M4 4.500L8.500 2 13 4.500v5L8.500 12 5 10M8.500 7v5M13 4.500L8.500 7" /></Svg>
      <div className="mt-[4px] h-[162px] w-[13px] rounded-full bg-[#343434]" />
    </div>
  </div>
);

const Timeline = () => (
  <section className="mt-[4px] flex h-[328px] shrink-0 flex-col bg-[#232323]">
    <div className="flex h-[310px] shrink-0"><TimelineLeft /><TimelineRight /></div>
    <div className="ml-[2px] w-[806px] border-t border-black" />
    <div className="flex h-[17px] shrink-0 items-center pl-[6px] text-[#2d8ceb]">
      <Sel c="h-[16px] w-[16px]"><Svg w={12} h={12}><path d="M.6.6h6.400v6.400H.6zM2.600 7.500V9.500h5V3H7.500M5 5h6.400v6.400H5zM8.200 6.700v3M6.700 8.200h3" /></Svg></Sel>
      <Sel c="ml-[3px] h-[16px] w-[16px]"><Svg w={12} h={12}><circle cx="4.500" cy="4.500" r="3.900" /><path d="M5 5h6.400v6.400H5z" /></Svg></Sel>
      <Svg w={12} h={12} c="ml-[5px] text-[#a0a0a0]"><path d="M3 0h2v12H3V8L0 6l3-2zM7 0h2v4l3 2-3 2v4H7zM5 3h2v6H5z" {...F} /></Svg>
      <Svg w={13} h={10} c="ml-[7px] text-[#a8a8a8]"><path d="M0 9c2 0 1.500-1.500.8-3.500C0 2 2 0 4.500 0S9 2 9 4.500L10.500 4V0h1v3H13v2.500L9.500 9H8z" {...F} /></Svg>
      <T w={100} c="ml-[29px] text-[11.500px] text-[#a0a0a0]">Frame Render Time:</T>
      <T w={21} c="ml-[6px] text-[11.500px] font-semibold text-[#56dba8]">2ms</T>
      <Svg w={10} h={5} c="ml-[472px] text-[#b0b0b0]"><path d="M0 5l3-3 1 1 2.500-3L10 5z" {...F} /></Svg>
      <div className="ml-[11px] h-[10px] w-[10px] rounded-full border-2 border-[#a0a0a0]" /><div className="h-[2px] w-[38px] bg-[#444]" />
      <Svg w={17} h={7} c="ml-[12px] text-[#b0b0b0]"><path d="M0 7l5-5 1 1-3.500 4zM4 7l7-7 6 7z" {...F} /></Svg>
    </div>
  </section>
);

/* ---------- taskbar ---------- */
const TB = ({ run = true, active, w = "w-[49px]", children }) => (
  <div className={"relative flex h-full shrink-0 items-center justify-center " + w + (active ? " bg-[#505050]" : "")}>
    {children}
    {run && <div className={"absolute bottom-0 h-[2px] bg-[#76b9ed] " + (active ? "w-full" : "w-[40px]")} />}
  </div>
);
const Raw = ({ s = 24, children }) => <svg width={s} height={s} viewBox="0 0 24 24" fill="none" className="shrink-0">{children}</svg>;
const Taskbar = () => (
  <div className="mt-px flex h-[40px] shrink-0 items-stretch bg-[#1c1c1c] font-['Noto_Sans','Noto_Sans_CJK_KR',sans-serif] text-white">
    <TB run={false}><svg width="17" height="17" viewBox="0 0 17 17" fill="#fff"><path d="M0 2.500l7-1v6.700H0zM8 1.300L17 0v8.200H8zM0 9h7v6.600l-7-1zM8 9h9v8l-9-1.300z" /></svg></TB>
    <TB w="w-[50px]"><Raw><path d="M1 7C3-1 19-2 23 7c-3-1-6 0-8 3-1.500 2-3.500 2-5 0C8 7.500 4 7 1 7z" fill="#1d2a78" /><path d="M.5 8c5-.5 9 2 9.500 7 3-1 4-5 9-6-3 5-4 10-11 15C3 21-.5 15 .5 8z" fill="#19b394" /><path d="M23.500 8c1.500 9-5 16-15.500 16 6-4 6-14 15.500-16z" fill="#e8f6f2" /></Raw></TB>
    <TB run={false}><Raw><circle cx="12" cy="12" r="12" fill="#fbc116" /><path d="M12 12L1.600 6A12 12 0 0 0 11 24l6-9z" fill="#2aa24c" /><path d="M12 6h10.400A12 12 0 0 0 1.600 6l5.200 9z" fill="#e33b2e" /><path d="M12 6h10.400A12 12 0 0 1 11 24l6.200-9z" fill="#fbc116" /><circle cx="12" cy="12" r="6" fill="#fff" /><circle cx="12" cy="12" r="4.700" fill="#3b82ec" /></Raw></TB>
    <TB><Raw><path d="M1 3h8l2 2.500h12V21H1z" fill="#e9a920" /><path d="M1 7h22v13H1z" fill="#fcd667" /><path d="M5 14c0-1.500 1-2 2-2h10c1 0 2 .5 2 2v8h-4v-4H9v4H5z" fill="#2f8ad8" /></Raw></TB>
    <TB run={false}><Raw><circle cx="12" cy="12" r="11.500" fill="#124a80" /><path d="M.8 9A11.500 11.500 0 0 1 23 9L.8 14z" fill="#10223f" /><circle cx="15.500" cy="8.500" r="4" stroke="#fff" strokeWidth="1.600" /><circle cx="15.500" cy="8.500" r="2" fill="#fff" /><path d="M.8 12.500l7 2.800 5-4 3 2.500-4.500 3.500c0 3.500-5 4-6 .8L1.500 16z" fill="#fff" /></Raw></TB>
    <TB w="w-[50px]"><Raw><circle cx="12" cy="12" r="12" fill="#5865f2" /><path d="M6 7.500c3-2 9-2 12 0 1.500 3 2 6 1.700 8.500-1.500 1.200-2.500 1.500-3.500 1.700l-1-1.700c-2 .6-4.500.6-6.500 0l-1 1.700c-1-.2-2-.5-3.500-1.700C4 13.500 4.500 10.500 6 7.500z" fill="#fff" /><ellipse cx="9" cy="12.500" rx="1.600" ry="1.800" fill="#5865f2" /><ellipse cx="15" cy="12.500" rx="1.600" ry="1.800" fill="#5865f2" /></Raw></TB>
    <TB><Raw><path d="M17 0l6.500 3v18L17 24z" fill="#2aa5ee" /><path d="M17 0v7L3.500 18 .5 15.500z" fill="#0a6ab5" /><path d="M17 24v-7L3.500 6 .5 8.500z" fill="#1485cf" /></Raw></TB>
    <TB><Raw><circle cx="12" cy="12" r="11.800" fill="#1478cc" /><path d="M.5 11C1 4 6 .2 12 .2c7 0 12 5 11.700 10.500C23 15 18 16 14.500 14.500c1.500-2 .5-5.500-3-6.500C7 7 2 8.500.5 11z" fill="#35c5a0" /><path d="M13 .3c7 .3 11 5 10.700 10.400C23 15 18 16 14.500 14.500 18 11 17 5 13 .3z" fill="#62d84e" opacity=".7" /><path d="M9 13c-1 5 3 9 8 9 2 0 4-1.500 5-3.500-5 2-9-.5-9.500-4z" fill="#1c1c1c" opacity=".55" /></Raw></TB>
    <TB><Raw><path d="M1 1h22v22H1z" fill="#29a5ec" /><path d="M1 14l7-7 8 8 2-2 5 5v5H1z" fill="#1b4e90" /><path d="M1 14l7-7 15 16H1z" fill="#143c7a" /><circle cx="16" cy="6" r="2" fill="#fff" /></Raw></TB>
    <TB active><AeLogo c="h-[21px] w-[21px] rounded-[4px]" t="text-[12px]" /></TB>
    <div className="flex-1" />
    <Left c="w-[33px]"><svg width="25" height="24" viewBox="0 0 25 24"><path d="M16 2c9 3 9 14 2 18-6 4-14 2-16-3 9 1 15-7 14-15z" fill="#f5b335" /><path d="M2 17c2 5 10 7 16 3l-6-2z" fill="#e97b1c" /><path d="M3 10a3 3 0 0 1 .5-6C5 0 10 0 11 4c3-.5 4 6 0 6z" fill="#c6d8f5" /><path d="M13 22a3 3 0 0 1 0-5c1-4 6-4 7 0 4-1 5 5 1 5z" fill="#a9c4f0" /></svg></Left>
    <Left c="w-[30px] text-[14px]"><T w={21}>1°C</T></Left>
    <Left c="w-[76px] text-[13.500px]"><T w={61}>구름 조금</T></Left>
    <Cell c="w-[14px]"><Svg w={12} h={8}><path d="M.5 7L6 1.500 11.500 7" /></Svg></Cell>
    <Cell c="w-[34px]"><Svg w={12} h={16}><rect x=".6" y="4.500" width="7.500" height="7" rx="1" /><path d="M8 7l3-2v6L8 9M2.500 1.800c2-1.300 5-1.300 7 0M2.500 14.200c2 1.300 5 1.300 7 0" /></Svg></Cell>
    <Cell c="w-[14px]"><Svg w={17} h={17}><path d="M1 3l14-2v12H1z M10.500 5.500C7 3 4 7 6 9.500c1.500 2 4 1 5-.5M6 7h5" /><circle cx="13" cy="13" r="3.500" fill="#ff9500" stroke="none" /></Svg></Cell>
    <Cell c="w-[34px]"><Svg w={17} h={15}><path d="M4.500 1.500h12v8.500h-12M.6 1h4v3.500h-4zM2.500 4.500V13h8M10.500 10v3M6 13.500h9" /></Svg></Cell>
    <Cell c="w-[16px]"><Svg w={17} h={14}><path d="M.6 4.500h2.800L7 1.500v11L3.400 9.500H.6zM9 4.500c1.300 1.500 1.300 3.500 0 5M11.500 2.500c2.300 2.500 2.300 6.500 0 9M14 .8c3 3.500 3 9 0 12.400" /></Svg></Cell>
    <Cell c="w-[38px]"><Svg w={17} h={16}><path d="M4.500 9C1.500 8.500.8 11 .8 14c2 1 4.500.5 5-2zM6.500 11.500L4 9l8-7.500c1.500-1 3 .5 2 2zM8 13.500c1.500 1 3-.5 2.500-2s1-3 2.500-2 .5 2.500 3 1" /></Svg></Cell>
    <Cell c="w-[16px] text-[17px]">A</Cell>
    <div className="flex w-[88px] shrink-0 flex-col items-center justify-center gap-[6px] text-[12.500px]"><T w={52}>오후 8:37</T><T w={66}>2022-12-16</T></div>
    <div className="relative flex w-[44px] shrink-0 justify-center pr-[12px] pt-[11px]">
      <Svg w={17} h={16}><path d="M0 0h17v13H8l-4 3v-3H0z" {...F} /><path d="M3 3.500h11M3 6.500h11M3 9.500h7" stroke="#1c1c1c" /></Svg>
      <div className="absolute left-[15px] top-[18px] flex h-[17px] w-[17px] items-center justify-center rounded-full border border-[#999] bg-[#333] text-[11px] leading-none">3</div>
    </div>
    <div className="mr-[4px] w-px shrink-0 bg-[#777]" />
  </div>
);

export default function App() {
  return (
    <div className="flex h-[1080px] w-[1920px] flex-col overflow-hidden bg-[#161616] font-['Noto_Sans','Noto_Sans_CJK_KR',sans-serif]">
      <TitleBar />
      <MenuBar />
      <Toolbar />
      <main className="mt-[2px] flex h-[637px] shrink-0"><ProjectPanel /><Viewer /><RightDock /></main>
      <Timeline />
      <Taskbar />
    </div>
  );
}
